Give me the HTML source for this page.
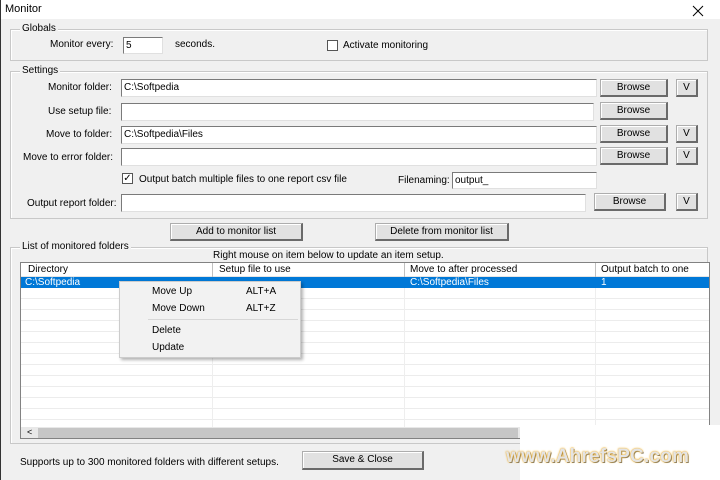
<!DOCTYPE html>
<html><head><style>
*{margin:0;padding:0;box-sizing:border-box}
body{width:720px;height:480px;position:relative;overflow:hidden;background:#f0f0f0;font-family:"Liberation Sans",sans-serif;font-size:10px;color:#000}
.a{position:absolute;white-space:nowrap}
.grp{position:absolute;border:1px solid #c8c8c8;box-shadow:inset 1px 1px 0 #fff}
.gl{position:absolute;background:#f0f0f0;padding:0 2px;top:-7px;left:8px}
.in{position:absolute;background:#fff;border:1px solid #7a7a7a;border-right-color:#e0e0e0;border-bottom-color:#e0e0e0;padding:1px 2px;line-height:13px}
.bt{position:absolute;background:#e1e1e1;border:1px solid #adadad;border-right:2px solid #6a6a6a;border-bottom:2px solid #6a6a6a;box-shadow:inset 1px 1px 0 #fff;text-align:center;line-height:16px}
.cb{position:absolute;width:11px;height:11px;border:1px solid #555;background:#fff;font-size:10px;line-height:9px;text-align:center}
</style></head><body>
<div class="a" style="left:0;top:0;width:720px;height:19px;background:#fff"></div>
<div class="a" style="left:0;top:0;width:1px;height:480px;background:#333"></div>
<div class="a" style="left:5px;top:3px;font-size:11px">Monitor</div>
<svg class="a" style="left:692px;top:5px" width="12" height="12"><path d="M1 1L11 11M11 1L1 11" stroke="#000" stroke-width="1"/></svg>

<div class="grp" style="left:10px;top:29px;width:698px;height:32px"><span class="gl" style="left:9px">Globals</span></div>
<div class="a" style="left:50px;top:39px">Monitor every:</div>
<div class="in" style="left:123px;top:37px;width:40px;height:17px">5</div>
<div class="a" style="left:175px;top:39px">seconds.</div>
<div class="cb" style="left:327px;top:40px"></div>
<div class="a" style="left:343px;top:40px">Activate monitoring</div>

<div class="grp" style="left:10px;top:71px;width:698px;height:148px"><span class="gl" style="left:9px">Settings</span></div>
<div class="a" style="left:48px;top:82px">Monitor folder:</div>
<div class="in" style="left:121px;top:79px;width:476px;height:18px">C:\Softpedia</div>
<div class="bt" style="left:600px;top:79px;width:68px;height:18px">Browse</div>
<div class="bt" style="left:676px;top:79px;width:22px;height:18px">V</div>
<div class="a" style="left:48px;top:106px">Use setup file:</div>
<div class="in" style="left:121px;top:103px;width:473px;height:18px"></div>
<div class="bt" style="left:600px;top:102px;width:68px;height:18px">Browse</div>
<div class="a" style="left:46px;top:129px">Move to folder:</div>
<div class="in" style="left:121px;top:126px;width:476px;height:18px">C:\Softpedia\Files</div>
<div class="bt" style="left:600px;top:125px;width:68px;height:18px">Browse</div>
<div class="bt" style="left:676px;top:125px;width:22px;height:18px">V</div>
<div class="a" style="left:23px;top:152px">Move to error folder:</div>
<div class="in" style="left:121px;top:148px;width:476px;height:18px"></div>
<div class="bt" style="left:600px;top:147px;width:68px;height:18px">Browse</div>
<div class="bt" style="left:676px;top:147px;width:22px;height:18px">V</div>
<div class="cb" style="left:122px;top:173px">✓</div>
<div class="a" style="left:139px;top:174px">Output batch multiple files to one report csv file</div>
<div class="a" style="left:398px;top:175px">Filenaming:</div>
<div class="in" style="left:452px;top:172px;width:145px;height:17px">output_</div>
<div class="a" style="left:27px;top:198px">Output report folder:</div>
<div class="in" style="left:121px;top:194px;width:465px;height:18px"></div>
<div class="bt" style="left:594px;top:193px;width:72px;height:18px">Browse</div>
<div class="bt" style="left:676px;top:193px;width:22px;height:18px">V</div>

<div class="bt" style="left:170px;top:223px;width:133px;height:18px">Add to monitor list</div>
<div class="bt" style="left:375px;top:223px;width:134px;height:18px">Delete from monitor list</div>

<div class="grp" style="left:10px;top:247px;width:698px;height:197px"><span class="gl" style="left:9px">List of monitored folders</span></div>
<div class="a" style="left:213px;top:250px">Right mouse on item below to update an item setup.</div>
<div class="a" style="left:20px;top:262px;width:690px;height:177px;background:#fff;border:1px solid #828282;overflow:hidden">
 <div style="position:absolute;left:0;top:0;width:700px;height:14px;border-bottom:1px solid #e5e5e5">
  <span class="a" style="left:7px;top:1px">Directory</span>
  <span class="a" style="left:191px;top:0;width:1px;height:14px;background:#c0c0c0"></span>
  <span class="a" style="left:198px;top:1px">Setup file to use</span>
  <span class="a" style="left:383px;top:0;width:1px;height:14px;background:#c0c0c0"></span>
  <span class="a" style="left:389px;top:1px">Move to after processed</span>
  <span class="a" style="left:574px;top:0;width:1px;height:14px;background:#c0c0c0"></span>
  <span class="a" style="left:580px;top:1px">Output batch to one</span>
 </div>
 <div style="position:absolute;left:0;top:14px;width:700px;height:150px;background:repeating-linear-gradient(#fff 0,#fff 10px,#ececec 10px,#ececec 11px)"></div>
 <div style="position:absolute;left:191px;top:14px;width:1px;height:150px;background:#eee"></div>
 <div style="position:absolute;left:383px;top:14px;width:1px;height:150px;background:#eee"></div>
 <div style="position:absolute;left:574px;top:14px;width:1px;height:150px;background:#eee"></div>
 <div style="position:absolute;left:0;top:14px;width:700px;height:11px;background:#0078d7;color:#fff;line-height:11px">
  <span class="a" style="left:4px">C:\Softpedia</span><span class="a" style="left:389px">C:\Softpedia\Files</span><span class="a" style="left:580px">1</span></div>
 <div style="position:absolute;left:0;top:164px;width:700px;height:12px;background:#e8e8e8"></div>
 <div style="position:absolute;left:17px;top:165px;width:480px;height:10px;background:#c6c6c6"></div>
 <span class="a" style="left:6px;top:164px;font-size:9px">&lt;</span>
</div>

<div class="a" style="left:119px;top:281px;width:182px;height:77px;background:#f2f2f2;border:1px solid #ccc;box-shadow:2px 2px 3px rgba(0,0,0,.3);font-size:10px">
 <span class="a" style="left:32px;top:4px">Move Up</span><span class="a" style="left:126px;top:4px">ALT+A</span>
 <span class="a" style="left:32px;top:21px">Move Down</span><span class="a" style="left:126px;top:21px">ALT+Z</span>
 <span class="a" style="left:28px;top:37px;width:150px;height:1px;background:#d7d7d7"></span>
 <span class="a" style="left:32px;top:43px">Delete</span>
 <span class="a" style="left:32px;top:60px">Update</span>
</div>

<div class="a" style="left:20px;top:457px">Supports up to 300 monitored folders with different setups.</div>
<div class="bt" style="left:302px;top:451px;width:122px;height:19px">Save &amp; Close</div>

<div class="a" style="left:520px;top:425px;width:200px;height:55px;background:#fff"></div>
<div class="a" style="left:506px;top:446px;font-size:19px;font-weight:bold;color:#e4e4e4;letter-spacing:0.2px;text-shadow:0 0 1px #e8a020,0 0 2px #f0b020,1px 1px 0 #777">www.AhrefsPC.com</div>
</body></html>
